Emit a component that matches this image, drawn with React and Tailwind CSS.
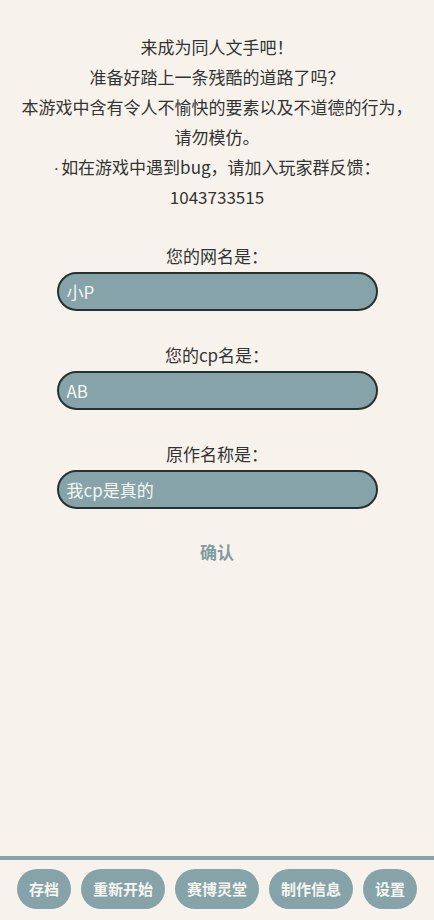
import React, { useState } from 'react'

const font = { fontFamily: '"Noto Sans CJK SC", "Noto Sans", sans-serif' }

const Field = ({ label, value, onChange }) => (
    <div className="flex flex-col items-center">
        <label className="text-[17px] leading-[30px] text-[#333333]">{label}</label>
        <input
            value={value}
            onChange={e => onChange(e.target.value)}
            className="mt-[1px] w-[321px] h-[39px] rounded-full border-2 border-[#263232] bg-[#85a3a8] px-[8px] text-[17px] text-[#f6f6f2] outline-none"
        />
    </div>
)

export default function App() {
    const [name, setName] = useState('小P')
    const [cp, setCp] = useState('AB')
    const [origin, setOrigin] = useState('我cp是真的')

    const tabs = ['存档', '重新开始', '赛博灵堂', '制作信息', '设置']

    return (
        <div style={font} className="w-[434px] h-[920px] bg-[#f7f3ec] flex flex-col">
            <div className="flex-1 flex flex-col items-center pt-[32px]">
                <div className="text-center text-[17px] leading-[30px] text-[#333333]">
                    <p>来成为同人文手吧！</p>
                    <p>准备好踏上一条残酷的道路了吗？</p>
                    <p>本游戏中含有令人不愉快的要素以及不道德的行为，</p>
                    <p>请勿模仿。</p>
                    <p className="h-[30px]"><span className="font-['Liberation_Sans'] leading-none mr-[2px]">·</span>如在游戏中遇到bug，请加入玩家群反馈：</p>
                    <p>1043733515</p>
                </div>

                <div className="mt-[29px] flex flex-col gap-[29px]">
                    <Field label="您的网名是：" value={name} onChange={setName} />
                    <Field label="您的cp名是：" value={cp} onChange={setCp} />
                    <Field label="原作名称是：" value={origin} onChange={setOrigin} />
                </div>

                <button className="mt-[28px] text-[17px] font-bold leading-[30px] text-[#7f9ca1]">确认</button>
            </div>

            <div className="border-t-4 border-[#85a3a8] h-[64px] flex items-center justify-center gap-[10px] pb-[2px]">
                {tabs.map(tab => (
                    <button
                        key={tab}
                        className="h-[40px] rounded-full bg-[#85a3a8] px-[12px] text-[15px] font-bold text-[#f7f5f0]"
                    >
                        {tab}
                    </button>
                ))}
            </div>
        </div>
    )
}
